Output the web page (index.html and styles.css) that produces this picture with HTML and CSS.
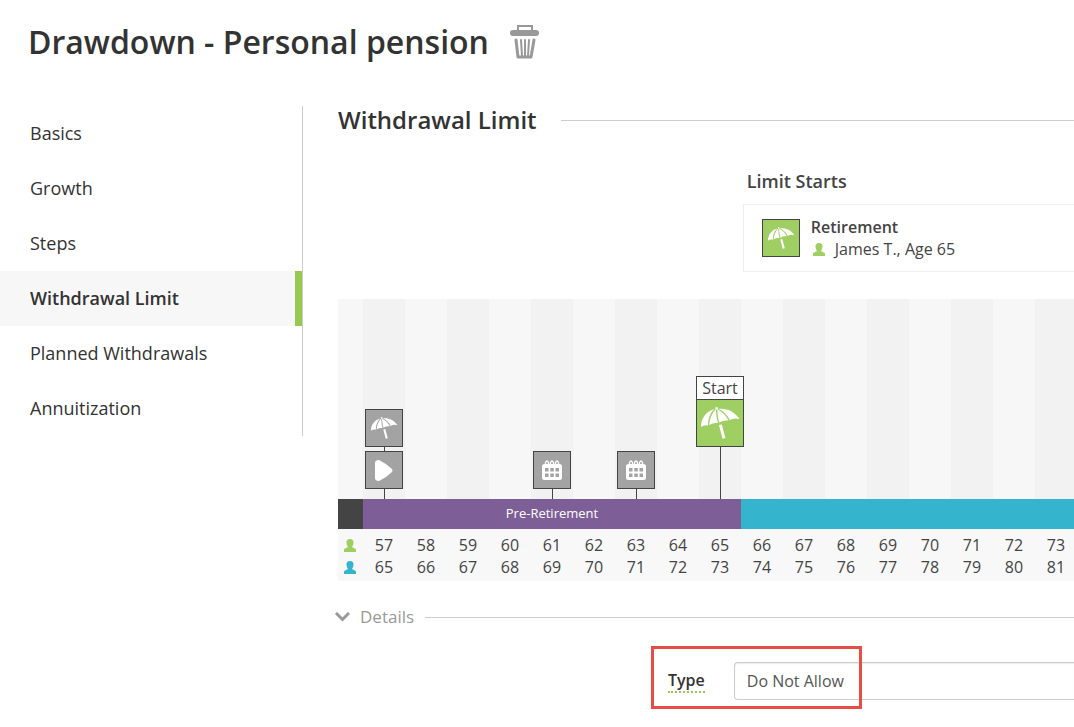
FILE: index.html
```html
<!DOCTYPE html>
<html lang="en">
<head>
    <meta charset="UTF-8">
    <meta name="viewport" content="width=device-width, initial-scale=1.0">
    <link rel="stylesheet" href="styles.css">
    <title>Drawdown - Personal pension</title>
</head>
<body>

    <!-- shared icon shapes -->
    <svg class="sprite" aria-hidden="true">
        <symbol id="umbrella" viewBox="0 0 40 32">
            <path d="M14.500 2 C7 4 1 10 1 20 Q4 17.500 8 18.500 C8 12 10 6 14.500 2Z"/>
            <path d="M16 2 C12 6 9.500 12 9.300 18 Q13 15.500 18 16 C16.500 11 16 7 16 2Z"/>
            <path d="M17.300 2 C17.300 7 18 11 19.300 15.500 Q23 13 28.500 13.500 C26.500 9 22.500 5 17.300 2Z"/>
            <path d="M18.700 2 C23.500 4 27.500 8 29.800 13 Q34 10.500 39.500 12 C35 5 27 1 18.700 2Z"/>
            <path d="M15.300 0.500 L17.500 0 L18 2 L15.700 2.500Z"/>
            <path d="M19 18 L21.800 17.500 L25.500 31 L22.500 31.700Z"/>
        </symbol>
        <symbol id="person" viewBox="0 0 12 13">
            <path d="M6 0 C8.800 0 9.800 2 9.500 4 C9.300 6 8.500 7 8 8 C8.500 9 12 9 12 11 V13 H0 V11 C0 9 3.500 9 4 8 C3.500 7 2.700 6 2.500 4 C2.200 2 3.200 0 6 0Z"/>
        </symbol>
        <symbol id="calendar" viewBox="0 0 20 20">
            <path fill-rule="evenodd" d="M2.500 4 H17.500 Q20 4 20 6.500 V17.500 Q20 20 17.500 20 H2.500 Q0 20 0 17.500 V6.500 Q0 4 2.500 4Z M3 8 V11.500 H6.500 V8Z M8.300 8 V11.500 H11.800 V8Z M13.500 8 V11.500 H17 V8Z M3 13.500 V17 H6.500 V13.500Z M8.300 13.500 V17 H11.800 V13.500Z M13.500 13.500 V17 H17 V13.500Z"/>
            <path fill="none" stroke="currentColor" stroke-width="1.300" d="M3.500 5 V2.500 Q5 -0.500 6.500 2.500 V5 M8.500 5 V2.500 Q10 -0.500 11.500 2.500 V5 M13.500 5 V2.500 Q15 -0.500 16.500 2.500 V5"/>
        </symbol>
    </svg>

    <header class="page-header">
        <h1>Drawdown - Personal pension</h1>
        <button type="button" class="delete-button" aria-label="Delete">
            <svg viewBox="0 0 30 36" width="30" height="36">
                <path fill="none" stroke="currentColor" stroke-width="2" d="M8 6 V2 H22 V6"/>
                <rect x="0" y="6" width="29" height="6" rx="3"/>
                <path fill="none" stroke="currentColor" stroke-width="3" stroke-linecap="round" stroke-linejoin="round" d="M6 16 L8 33 H21 L24 16"/>
                <path fill="none" stroke="currentColor" stroke-width="2" stroke-linecap="round" d="M11 16 L12 32 M15 16 V32 M19 16 L18 32"/>
            </svg>
        </button>
    </header>

    <div class="layout">
        <nav class="side-nav">
            <a href="#basics">Basics</a>
            <a href="#growth">Growth</a>
            <a href="#steps">Steps</a>
            <a href="#limit" class="active" aria-current="page">Withdrawal Limit</a>
            <a href="#planned">Planned Withdrawals</a>
            <a href="#annuitization">Annuitization</a>
        </nav>

        <main class="content">
            <div class="section-title">
                <h2>Withdrawal Limit</h2>
            </div>

            <section class="limit">
                <h3>Limit Starts</h3>
                <div class="limit-card">
                    <span class="marker green"><svg class="icon-umbrella"><use href="#umbrella"/></svg></span>
                    <div>
                        <div class="limit-name">Retirement</div>
                        <div class="limit-owner">
                            <svg class="icon-person client"><use href="#person"/></svg>
                            James T., Age 65
                        </div>
                    </div>
                </div>
            </section>

            <section class="timeline">
                <div class="chart">
                    <div class="event age-57">
                        <span class="marker"><svg class="icon-umbrella"><use href="#umbrella"/></svg></span>
                        <span class="stem short"></span>
                        <span class="marker"><svg class="icon-play" viewBox="0 0 18 21"><path d="M0 3 Q0 0 4 0 Q12 4 17 9 Q18 10.500 17 12 Q12 17 4 21 Q0 21 0 18Z"/></svg></span>
                        <span class="stem"></span>
                    </div>
                    <div class="event age-61">
                        <span class="marker"><svg class="icon-calendar"><use href="#calendar"/></svg></span>
                        <span class="stem"></span>
                    </div>
                    <div class="event age-63">
                        <span class="marker"><svg class="icon-calendar"><use href="#calendar"/></svg></span>
                        <span class="stem"></span>
                    </div>
                    <div class="event age-65">
                        <span class="start-label">Start</span>
                        <span class="marker green large"><svg class="icon-umbrella"><use href="#umbrella"/></svg></span>
                        <span class="stem long"></span>
                    </div>
                </div>
                <div class="phases">
                    <div class="phase past"></div>
                    <div class="phase pre">Pre-Retirement</div>
                    <div class="phase post"></div>
                </div>
                <div class="ages">
                    <table>
                        <tr>
                            <th scope="row" aria-label="Client"><svg class="icon-person client"><use href="#person"/></svg></th>
                            <td>57</td><td>58</td><td>59</td><td>60</td><td>61</td><td>62</td><td>63</td><td>64</td><td>65</td>
                            <td>66</td><td>67</td><td>68</td><td>69</td><td>70</td><td>71</td><td>72</td><td>73</td>
                        </tr>
                        <tr>
                            <th scope="row" aria-label="Partner"><svg class="icon-person partner"><use href="#person"/></svg></th>
                            <td>65</td><td>66</td><td>67</td><td>68</td><td>69</td><td>70</td><td>71</td><td>72</td><td>73</td>
                            <td>74</td><td>75</td><td>76</td><td>77</td><td>78</td><td>79</td><td>80</td><td>81</td>
                        </tr>
                    </table>
                </div>
            </section>

            <div class="details">
                <button type="button" class="details-toggle" aria-expanded="true">
                    <svg viewBox="0 0 16 10" width="16" height="10"><path fill="none" stroke="currentColor" stroke-width="3" d="M2 1 L8.500 7.500 L15 1"/></svg>
                    Details
                </button>
            </div>

            <form class="type-form">
                <label for="limitType">Type</label>
                <select id="limitType" name="limitType">
                    <option>Do Not Allow</option>
                </select>
                <span class="highlight"></span>
            </form>
        </main>
    </div>

</body>
</html>
```
FILE: styles.css
```css
body {
    margin: 0;
    font-family: "Open Sans", sans-serif;
    font-size: 16px;
    line-height: 22px;
    color: #444;
    background-color: #fff;
}

h1, h2, h3 {
    margin: 0;
    font-weight: 600;
    color: #333;
}

svg {
    display: block;
    fill: currentColor;
}

.sprite {
    display: none;
}

.page-header {
    display: flex;
    align-items: center;
    gap: 21px;
    height: 84px;
    padding-left: 28px;
    margin-bottom: 22px;
}

.page-header h1 {
    font-size: 32px;
    line-height: 44px;
}

.delete-button {
    padding: 0;
    border: none;
    background: none;
    color: #999;
    cursor: pointer;
}

.layout {
    display: flex;
    align-items: flex-start;
}

.side-nav {
    width: 302px;
    flex-shrink: 0;
    border-right: 1px solid #ccc;
}

.side-nav a {
    display: block;
    padding-left: 30px;
    font-size: 18px;
    line-height: 55px;
    color: #333;
    text-decoration: none;
}

.side-nav a.active {
    border-right: 7px solid #96c94f;
    background-color: #f7f7f7;
    font-weight: 600;
}

.content {
    flex: 1;
    min-width: 0;
    padding: 0 0 27px 35px;
}

/* headings followed by a rule */
.section-title,
.details {
    display: flex;
    align-items: center;
}

.section-title::after,
.details::after {
    content: "";
    flex: 1;
    height: 1px;
    background-color: #ccc;
}

.section-title {
    gap: 24px;
    height: 28px;
}

.section-title h2 {
    font-size: 24px;
    line-height: 28px;
}

.limit {
    margin-left: 55%;
    padding-top: 36px;
}

.limit h3 {
    padding-left: 4px;
    font-size: 18px;
    line-height: 22px;
    color: #444;
}

.limit-card {
    display: flex;
    align-items: center;
    gap: 11px;
    height: 66px;
    margin-top: 12px;
    padding-left: 18px;
    border: 1px solid #eee;
    border-right: none;
}

.limit-name {
    font-weight: 600;
}

.limit-owner {
    display: flex;
    align-items: center;
    gap: 10px;
}

.client {
    color: #9fcf62;
}

.partner {
    color: #34b4cd;
}

.icon-person {
    width: 12px;
    height: 13px;
    margin-left: 2px;
}

.marker {
    display: flex;
    align-items: center;
    justify-content: center;
    box-sizing: border-box;
    width: 38px;
    height: 38px;
    border: 1px solid #444;
    background-color: #a3a3a3;
    color: #fff;
}

.marker.green {
    background-color: #9fcf62;
}

.marker.large {
    width: 48px;
    height: 48px;
}

.icon-umbrella {
    width: 28px;
    height: 22px;
}

.large .icon-umbrella {
    width: 40px;
    height: 32px;
}

.icon-play {
    width: 18px;
    height: 21px;
}

.icon-calendar {
    width: 20px;
    height: 20px;
}

.timeline {
    margin-top: 27px;
    overflow: hidden;
}

/* one 42px column for each year, after a 25px lead-in */
.chart {
    display: grid;
    grid-template-columns: 25px repeat(17, 42px);
    align-items: end;
    height: 200px;
    background: repeating-linear-gradient(to right, #f2f2f2 0 42px, #f7f7f7 42px 84px) 25px 0 / 840px 100%;
}

.event {
    display: flex;
    flex-direction: column;
    align-items: center;
    grid-row: 1;
    margin: 0 -3px;
}

.age-57 {
    grid-column: 2;
}

.age-61 {
    grid-column: 6;
}

.age-63 {
    grid-column: 8;
}

.age-65 {
    grid-column: 10;
}

.stem {
    width: 1px;
    height: 10px;
    background-color: #444;
}

.stem.short {
    height: 4px;
}

.stem.long {
    height: 52px;
}

.start-label {
    box-sizing: border-box;
    width: 48px;
    border: 1px solid #444;
    border-bottom: none;
    background-color: #fff;
    text-align: center;
}

.phases {
    display: flex;
    height: 30px;
    font-size: 13px;
    line-height: 29px;
    text-align: center;
    color: #fff;
}

.past {
    width: 25px;
    background-color: #444;
}

.pre {
    width: 378px;
    background-color: #7d5e96;
}

.post {
    flex: 1;
    background-color: #34b4cd;
}

.ages {
    padding: 5px 0 3px;
    background-color: #f8f8f8;
}

.ages table {
    width: 739px;
    table-layout: fixed;
    border-collapse: collapse;
    text-align: center;
}

.ages th {
    width: 25px;
    padding: 0;
}

.ages td {
    height: 22px;
    padding: 0;
}

.ages .icon-person {
    margin-left: 6px;
}

.details {
    gap: 11px;
    margin: 25px 0 34px -4px;
}

.details-toggle {
    display: flex;
    align-items: center;
    gap: 10px;
    padding: 0;
    border: none;
    background: none;
    font: inherit;
    font-size: 17px;
    color: #999;
    cursor: pointer;
}

.type-form {
    display: flex;
    align-items: center;
    gap: 29px;
    position: relative;
    padding-left: 330px;
}

.type-form label {
    border-bottom: 2px dotted #96c94f;
    font-weight: 600;
    color: #333;
}

.type-form select {
    flex: 1;
    height: 38px;
    padding: 0 12px;
    appearance: none;
    border: 1px solid #ccc;
    border-right: none;
    border-radius: 4px 0 0 4px;
    box-shadow: inset 0 1px 1px rgba(0, 0, 0, 0.08);
    background-color: #fff;
    font: inherit;
    color: #555;
}

/* callout drawn over the field */
.highlight {
    position: absolute;
    top: -16px;
    left: 313px;
    box-sizing: border-box;
    width: 211px;
    height: 63px;
    border: 3px solid #e94b45;
    pointer-events: none;
}
```
